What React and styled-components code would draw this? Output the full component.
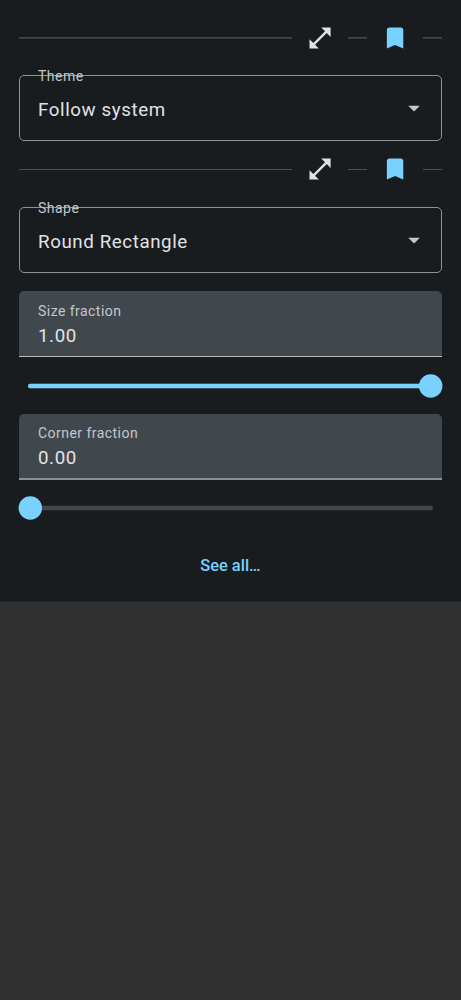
import React from "react";
import styled, { createGlobalStyle } from "styled-components";

const GlobalStyle = createGlobalStyle`
  *, *::before, *::after { box-sizing: border-box; }
  body {
    margin: 0;
    background: #303030;
    font-family: Roboto, "Liberation Sans", sans-serif;
  }
`;

const Panel = styled.main`
  display: flex;
  flex-direction: column;
  height: 602px;
  padding: 10px 19px 0;
  background: #191c1e;
  border-bottom: 1px solid #222526;
`;

const ActionRow = styled.div`
  display: flex;
  align-items: center;
  height: ${(p) => (p.$crisp ? 57 : 56)}px;
`;

const Rule = styled.div`
  flex: ${(p) => (p.$short ? "0 0 19px" : "1")};
  height: ${(p) => (p.$crisp ? 1 : 2)}px;
  background: ${(p) => (p.$crisp ? "#4b5053" : "linear-gradient(#41484d 50%, #343a3e 50%)")};
`;

const IconButton = styled.button`
  display: grid;
  place-items: center;
  flex: 0 0 56px;
  height: 55px;
  padding: 0;
  border: 0;
  background: none;
  color: ${(p) => (p.$active ? "#78d1ff" : "#e1e2e5")};
  svg { display: block; width: 28.12px; height: 28.12px; fill: currentColor; }
`;

const Select = styled.div`
  position: relative;
  display: flex;
  align-items: center;
  justify-content: space-between;
  height: 66px;
  margin: 9px 0 ${(p) => p.$after || 0}px;
  padding: 3px 13px 0 18px;
  border: 1px solid #8b9297;
  border-radius: 5px;
`;

const FloatingLabel = styled.span`
  position: absolute;
  left: 18px;
  top: -9px;
  font-size: 14.06px;
  line-height: 19px;
  letter-spacing: 0.46px;
  color: #c0c7cd;
`;

const Value = styled.span`
  font-size: 18.75px;
  line-height: 28px;
  letter-spacing: 0.58px;
  color: #e1e2e5;
`;

const Caret = styled.svg`
  display: block;
  width: 28.12px;
  height: 28.12px;
  margin-top: -2px;
  fill: #c0c7cd;
`;

const FilledField = styled.div`
  display: flex;
  flex-direction: column;
  height: 66px;
  padding: ${(p) => p.$inset}px 19px 0;
  border-radius: 5px 5px 0 0;
  border-bottom: ${(p) => (p.$thick ? "2px solid #8b9297" : "1px solid #b4bbc1")};
  background: #41484d;
`;

const FieldLabel = styled.span`
  margin-bottom: 1px;
  font-size: 14.06px;
  line-height: 19px;
  letter-spacing: 0.44px;
  color: #c0c7cd;
`;

const SliderRow = styled.div`
  display: flex;
  align-items: center;
  height: ${(p) => p.$height}px;
`;

const SliderSvg = styled.svg`
  display: block;
  width: 100%;
  height: 24px;
  overflow: visible;
`;

const SeeAll = styled.button`
  align-self: center;
  margin-top: 18px;
  padding: 0;
  border: 0;
  background: none;
  font-family: inherit;
  font-size: 16.4px;
  font-weight: 500;
  line-height: 23px;
  letter-spacing: 0;
  color: #78d1ff;
`;

function Actions({ crisp }) {
  return (
    <ActionRow $crisp={crisp}>
      <Rule $crisp={crisp} />
      <IconButton aria-label="Expand">
        <svg viewBox="0 0 24 24">
          <path d="M21 11V3h-8l3.29 3.29-10 10L3 13v8h8l-3.29-3.29 10-10z" />
        </svg>
      </IconButton>
      <Rule $short $crisp={crisp} />
      <IconButton $active aria-label="Bookmark">
        <svg viewBox="0 0 24 24">
          <path d="M17 3H7c-1.1 0-1.99.9-1.99 2L5 21l7-3 7 3V5c0-1.1-.9-2-2-2z" />
        </svg>
      </IconButton>
      <Rule $short $crisp={crisp} />
    </ActionRow>
  );
}

function SelectField({ label, value, after }) {
  return (
    <Select $after={after}>
      <FloatingLabel>{label}</FloatingLabel>
      <Value>{value}</Value>
      <Caret viewBox="0 0 24 24">
        <path d="M7 10l5 5 5-5z" />
      </Caret>
    </Select>
  );
}

function SliderField({ label, value, inset, thick, trackHeight }) {
  const start = 11.3;
  const end = 411.7;
  const x = start + (end - start) * value;
  return (
    <>
      <FilledField $inset={inset} $thick={thick}>
        <FieldLabel>{label}</FieldLabel>
        <Value>{value.toFixed(2)}</Value>
      </FilledField>
      <SliderRow $height={trackHeight}>
        <SliderSvg viewBox="0 0 423 24" role="slider" aria-valuenow={value}>
          <line x1={start} y1="12" x2={end} y2="12" stroke="#41484d" strokeWidth="4.7" strokeLinecap="round" />
          <line x1={start} y1="12" x2={x} y2="12" stroke="#78d1ff" strokeWidth="4.7" strokeLinecap="round" />
          <circle cx={x} cy="12" r="11.72" fill="#78d1ff" />
        </SliderSvg>
      </SliderRow>
    </>
  );
}

export default function App() {
  return (
    <>
      <GlobalStyle />
      <Panel>
        <Actions />
        <SelectField label="Theme" value="Follow system" />
        <Actions crisp />
        <SelectField label="Shape" value="Round Rectangle" after={18} />
        <SliderField label="Size fraction" value={1} inset={11} trackHeight={57} />
        <SliderField label="Corner fraction" value={0} inset={10} thick trackHeight={56} />
        <SeeAll>See all…</SeeAll>
      </Panel>
    </>
  );
}
